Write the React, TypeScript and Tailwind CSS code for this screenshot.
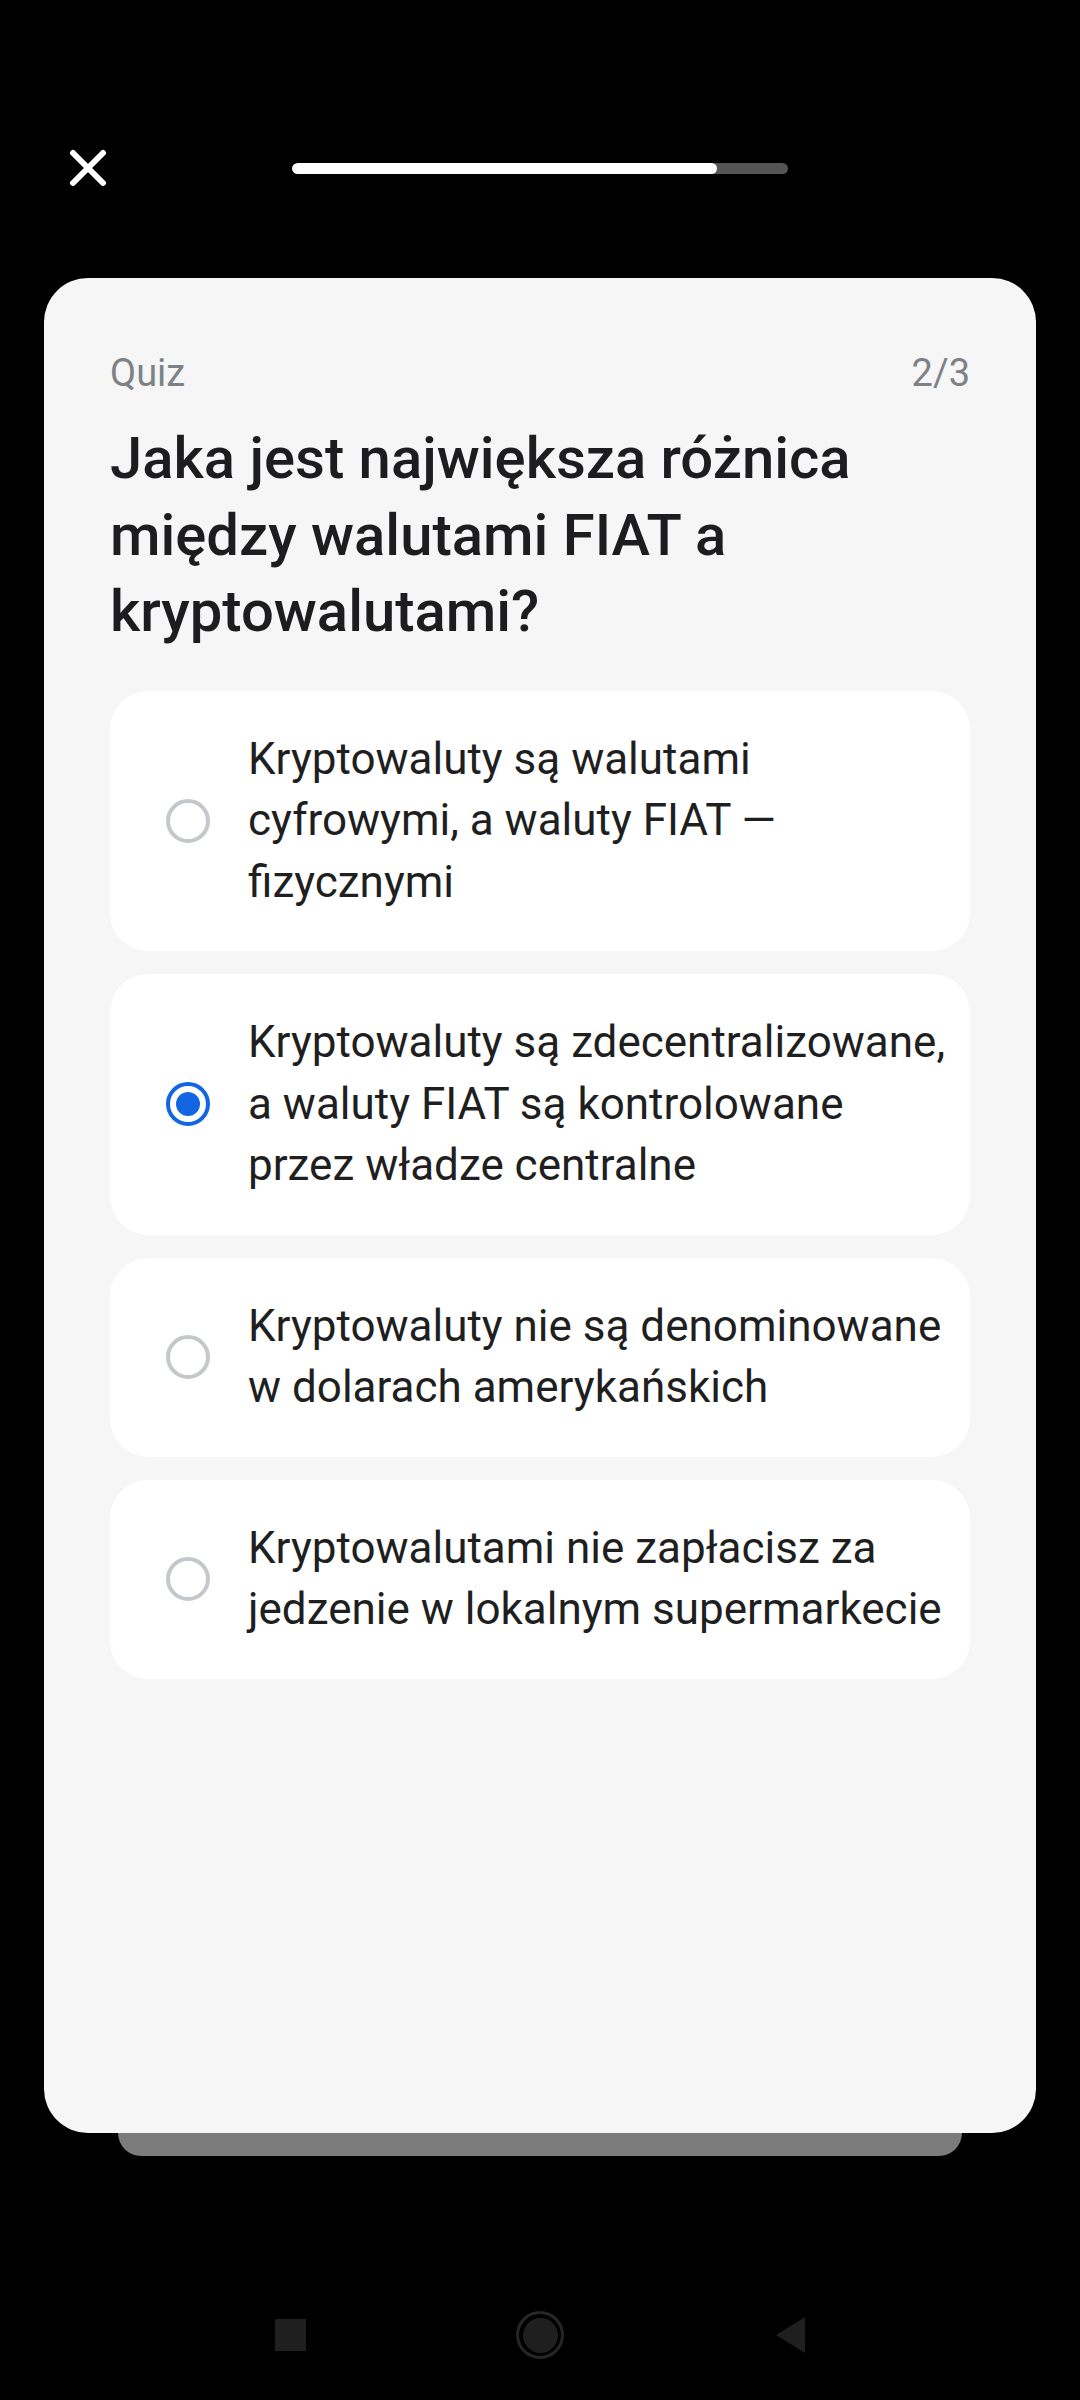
import React from "react";

type Option = {
  lines: string[];
  selected?: boolean;
};

const options: Option[] = [
  { lines: ["Kryptowaluty są walutami", "cyfrowymi, a waluty FIAT —", "fizycznymi"] },
  {
    lines: ["Kryptowaluty są zdecentralizowane,", "a waluty FIAT są kontrolowane", "przez władze centralne"],
    selected: true,
  },
  { lines: ["Kryptowaluty nie są denominowane", "w dolarach amerykańskich"] },
  { lines: ["Kryptowalutami nie zapłacisz za", "jedzenie w lokalnym supermarkecie"] },
];

function Radio({ selected }: { selected?: boolean }) {
  if (selected) {
    return (
      <div className="w-[44px] h-[44px] shrink-0 rounded-full border-[4px] border-[#1366e2] flex items-center justify-center">
        <div className="w-[24px] h-[24px] rounded-full bg-[#1366e2]" />
      </div>
    );
  }
  return <div className="w-[44px] h-[44px] shrink-0 rounded-full border-[4px] border-[#c5c8cb]" />;
}

export default function App() {
  return (
    <div
      className="w-full h-[2400px] bg-black flex flex-col overflow-hidden"
      style={{ fontFamily: "Roboto, 'Noto Sans', sans-serif" }}
    >
      {/* top bar */}
      <div className="h-[278px] pt-[149px] pl-[69px]">
        <div className="flex items-center h-[38px]">
          <svg width="38" height="38" viewBox="0 0 38 38" className="shrink-0">
            <path d="M4 4 L34 34 M34 4 L4 34" stroke="#fff" strokeWidth="6" strokeLinecap="round" />
          </svg>
          <div className="ml-[185px] w-[496px] h-[11px] rounded-full bg-[#555555] overflow-hidden">
            <div className="h-full w-[425px] rounded-full bg-white" />
          </div>
        </div>
      </div>

      {/* card */}
      <div className="mx-[44px] h-[1855px] rounded-[44px] bg-[#f6f6f6] px-[66px] pt-[71px]">
        <div className="flex justify-between text-[38px] leading-[48px] text-[#7d8287]">
          <span>Quiz</span>
          <span>2/3</span>
        </div>
        <h1 className="mt-[23px] text-[58px] leading-[76.5px] font-medium text-[#1d1d1f] whitespace-nowrap">
          <span className="block">Jaka jest największa różnica</span>
          <span className="block">między walutami FIAT a</span>
          <span className="block">kryptowalutami?</span>
        </h1>
        <div className="mt-[41px] flex flex-col gap-[23px]">
          {options.map((o, i) => (
            <div
              key={i}
              className="bg-white rounded-[38px] pl-[56px] pr-[10px] py-[38px] flex items-center gap-[38px]"
            >
              <Radio selected={o.selected} />
              <p className="text-[44px] leading-[61.5px] text-[#1f1f1f] whitespace-nowrap">
                {o.lines.map((l, j) => (
                  <span key={j} className="block">
                    {l}
                  </span>
                ))}
              </p>
            </div>
          ))}
        </div>
      </div>
      <div className="mx-[118px] h-[23px] rounded-b-[26px] bg-[#7c7c7c]" />

      {/* nav bar */}
      <div className="mt-[155px] flex items-center justify-center gap-[210px]">
        <div className="w-[31px] h-[32px] bg-[#1f1f1f]" />
        <div className="w-[48px] h-[48px] rounded-full border-[3px] border-[#262626] flex items-center justify-center">
          <div className="w-[35px] h-[35px] rounded-full bg-[#1f1f1f]" />
        </div>
        <svg width="31" height="36" viewBox="0 0 31 36">
          <path d="M31 0 L31 36 L2 18 Z" fill="#1f1f1f" />
        </svg>
      </div>
    </div>
  );
}
